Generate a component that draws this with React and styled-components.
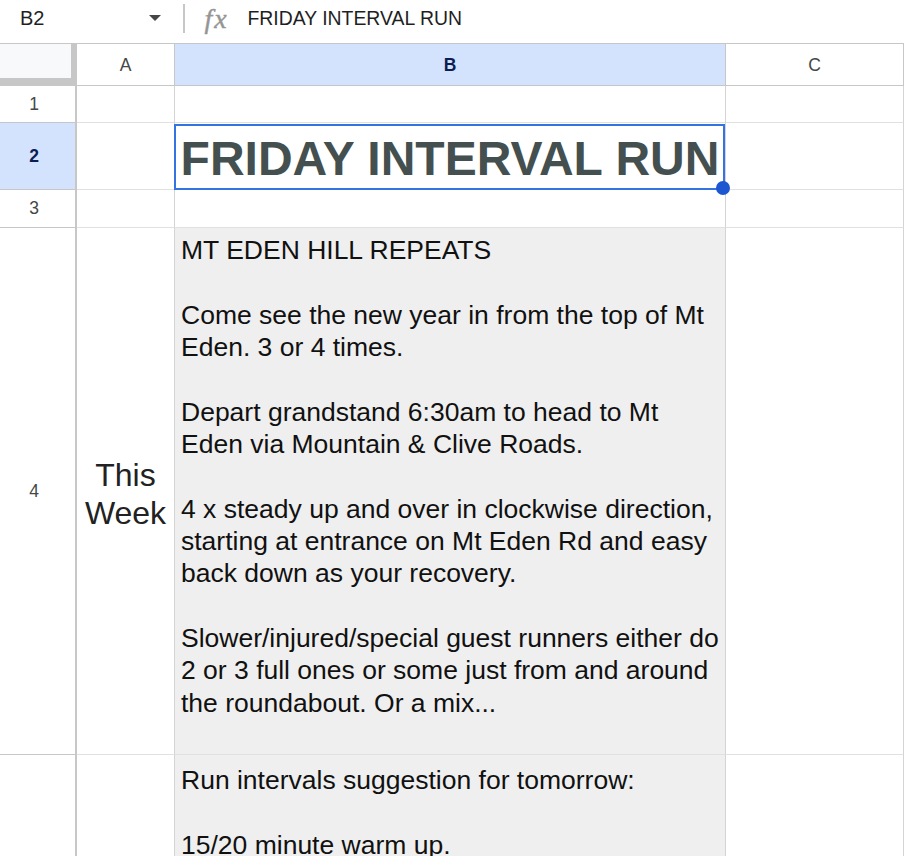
import React from 'react';
import styled, { createGlobalStyle } from 'styled-components';

const Global = createGlobalStyle`
  html, body { margin: 0; padding: 0; background: #fff; overflow: hidden; }
  body { font-family: "Liberation Sans", Arial, sans-serif; }
  #root { width: 904px; height: 856px; }
`;

const Page = styled.div`
  width: 904px;
  height: 856px;
  overflow: hidden;
  display: flex;
  flex-direction: column;
`;

const FormulaBar = styled.div`
  flex: 0 0 44px;
  box-sizing: border-box;
  border-bottom: 1px solid #c7c7c7;
  display: flex;
  align-items: center;
  padding-bottom: 7px;
  color: #1f1f1f;
`;

const NameBox = styled.div`
  box-sizing: border-box;
  width: 183px;
  padding: 0 22px 0 20px;
  display: flex;
  align-items: center;
  justify-content: space-between;
  font-size: 20px;
`;

const Caret = styled.span`
  width: 0;
  height: 0;
  border-left: 6px solid transparent;
  border-right: 6px solid transparent;
  border-top: 6px solid #444746;
`;

const Divider = styled.span`
  width: 1.5px;
  height: 29px;
  background: #c7c7c7;
`;

const FxIcon = styled.span`
  display: inline-block;
  width: 26px;
  margin: 2px 17px 0 20px;
  font-family: "Liberation Serif", "Times New Roman", serif;
  font-style: italic;
  font-size: 28px;
  letter-spacing: 2px;
  color: #959595;
  line-height: 1;
  -webkit-text-stroke: 0.4px #959595;
`;

const FormulaText = styled.span`
  font-size: 19.4px;
  color: #1f1f1f;
`;

const Grid = styled.div`
  display: grid;
  grid-template-columns: 77px 98px 551px 178px;
  grid-template-rows: 42px 37px 67px 38px 527px 220px;
`;

const Corner = styled.div`
  box-sizing: border-box;
  background: #f8f9fa;
  border-right: 6px solid #c7c7c7;
  border-bottom: 8px solid #c7c7c7;
`;

const ColHeader = styled.div`
  box-sizing: border-box;
  display: flex;
  align-items: center;
  justify-content: center;
  border-right: 1px solid #c7c7c7;
  border-bottom: 1px solid #c7c7c7;
  font-size: 17.5px;
  padding-top: 1px;
  background: ${p => (p.$selected ? '#d3e3fd' : '#fff')};
  color: ${p => (p.$selected ? '#0b1d51' : '#444746')};
  font-weight: ${p => (p.$selected ? 700 : 400)};
`;

const RowHeader = styled.div`
  box-sizing: border-box;
  display: flex;
  align-items: center;
  justify-content: center;
  padding-right: 7px;
  border-right: 2px solid #c7c7c7;
  border-bottom: 1px solid #c7c7c7;
  font-size: 17.5px;
  background: ${p => (p.$selected ? '#d3e3fd' : '#fff')};
  color: ${p => (p.$selected ? '#0b1d51' : '#444746')};
  font-weight: ${p => (p.$selected ? 700 : 400)};
`;

const Cell = styled.div`
  box-sizing: border-box;
  border-right: 1px solid #d4d4d4;
  border-bottom: 1px solid #e1e1e1;
  background: ${p => (p.$shade ? '#efefef' : '#fff')};
`;

const TitleCell = styled(Cell)`
  position: relative;
  display: flex;
  align-items: center;
  justify-content: center;
  padding-top: 5px;
  white-space: nowrap;
  font-size: 48px;
  font-weight: 700;
  line-height: 48px;
  color: #44504f;
`;

const Selection = styled.div`
  position: absolute;
  left: -1px;
  top: 1px;
  right: 0;
  bottom: -1px;
  border: 2px solid #3574e0;
  pointer-events: none;
`;

const Handle = styled.span`
  position: absolute;
  right: -7px;
  bottom: -7px;
  width: 14px;
  height: 14px;
  border-radius: 50%;
  background: #1d56d1;
`;

const LabelCell = styled(Cell)`
  display: flex;
  align-items: center;
  justify-content: center;
  text-align: center;
  font-size: 32px;
  line-height: 38px;
  color: #222;
  padding-top: 5px;
`;

const TextCell = styled(Cell)`
  padding: ${p => (p.$top ? p.$top : 6)}px 6px 0 6px;
  font-size: 26.5px;
  line-height: 32.35px;
  color: #111;
  overflow: hidden;
`;

const Line = styled.div`
  white-space: pre;
  min-height: 32.35px;
`;

const weekLines = [
  'MT EDEN HILL REPEATS',
  '',
  'Come see the new year in from the top of Mt',
  'Eden. 3 or 4 times.',
  '',
  'Depart grandstand 6:30am to head to Mt',
  'Eden via Mountain & Clive Roads.',
  '',
  '4 x steady up and over in clockwise direction,',
  'starting at entrance on Mt Eden Rd and easy',
  'back down as your recovery.',
  '',
  'Slower/injured/special guest runners either do',
  '2 or 3 full ones or some just from and around',
  'the roundabout. Or a mix...',
];

const nextLines = [
  'Run intervals suggestion for tomorrow:',
  '',
  '15/20 minute warm up.',
];

export default function App() {
  return (
    <Page>
      <Global />
      <FormulaBar>
        <NameBox>
          <span>B2</span>
          <Caret />
        </NameBox>
        <Divider />
        <FxIcon>fx</FxIcon>
        <FormulaText>FRIDAY INTERVAL RUN</FormulaText>
      </FormulaBar>
      <Grid>
        <Corner />
        <ColHeader>A</ColHeader>
        <ColHeader $selected>B</ColHeader>
        <ColHeader>C</ColHeader>

        <RowHeader>1</RowHeader>
        <Cell />
        <Cell />
        <Cell />

        <RowHeader $selected>2</RowHeader>
        <Cell />
        <TitleCell>
          FRIDAY INTERVAL RUN
          <Selection>
            <Handle />
          </Selection>
        </TitleCell>
        <Cell />

        <RowHeader>3</RowHeader>
        <Cell />
        <Cell />
        <Cell />

        <RowHeader>4</RowHeader>
        <LabelCell>
          This
          <br />
          Week
        </LabelCell>
        <TextCell $shade>
          {weekLines.map((l, i) => (
            <Line key={i}>{l}</Line>
          ))}
        </TextCell>
        <Cell />

        <RowHeader />
        <Cell />
        <TextCell $shade $top={9}>
          {nextLines.map((l, i) => (
            <Line key={i}>{l}</Line>
          ))}
        </TextCell>
        <Cell />
      </Grid>
    </Page>
  );
}
